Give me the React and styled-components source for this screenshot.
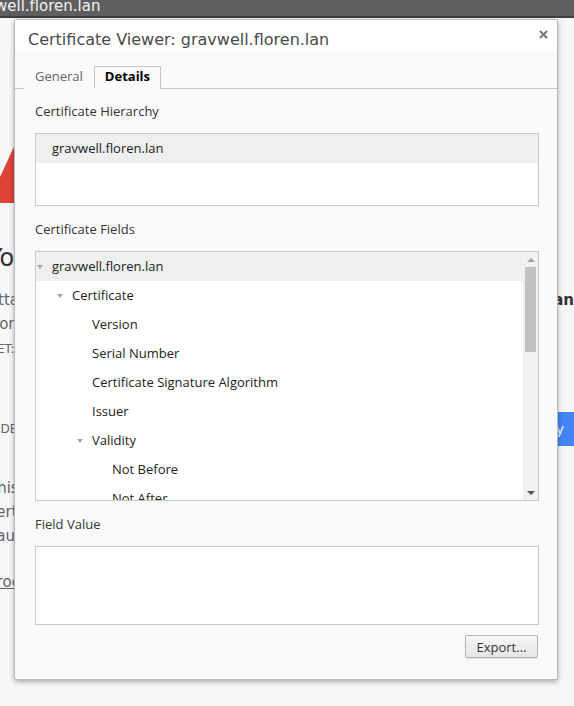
import React from "react";
import styled, { createGlobalStyle } from "styled-components";

const GlobalStyle = createGlobalStyle`
  html, body {
    margin: 0;
    padding: 0;
    background: #f7f7f7;
    overflow: hidden;
  }
  body {
    font-family: "Open Sans", "Noto Sans", sans-serif;
  }
`;

const Page = styled.div`
  position: relative;
  width: 574px;
  height: 706px;
  overflow: hidden;
  background: #f7f7f7;
`;

const AddressBar = styled.div`
  height: 16px;
  background: #5f5f5f;
  border-bottom: 2px solid #3f3f3f;
  color: #f2f2f2;
  font-family: "DejaVu Sans", sans-serif;
  font-size: 15px;
  line-height: 12px;
  white-space: nowrap;
  overflow: hidden;
  span {
    display: inline-block;
    margin-left: -5px;
  }
`;

/* the interstitial page behind the dialog */
const Interstitial = styled.main`
  width: 600px;
  margin-left: -12px;
  padding-top: 107px;
  color: #646464;
  font-family: "DejaVu Sans", sans-serif;
`;

const WarningIcon = styled.svg`
  display: block;
  width: 72px;
  height: 78px;
`;

const Heading = styled.h1`
  margin: 40px 0 0;
  font-size: 24px;
  line-height: 30px;
  font-weight: 400;
  color: #333;
  white-space: nowrap;
`;

const Para = styled.p`
  margin: ${(p) => p.$top}px 0 0;
  font-size: 15px;
  line-height: 24px;
  b {
    color: #333;
  }
`;

const ErrorCode = styled.div`
  margin-top: 4px;
  font-size: 12px;
  line-height: 18px;
  text-transform: uppercase;
`;

const Actions = styled.div`
  margin-top: 54px;
  height: 34px;
  display: flex;
  align-items: center;
  justify-content: space-between;
`;

const TextButton = styled.span`
  font-size: 12px;
  text-transform: uppercase;
  color: #646464;
`;

const PrimaryButton = styled.span`
  height: 34px;
  padding: 0 24px 0 16px;
  display: flex;
  align-items: center;
  background: #4285f4;
  color: #fff;
  font-size: 14px;
  border-radius: 2px;
`;

const Link = styled.div`
  margin-top: 22px;
  font-size: 15px;
  line-height: 24px;
  text-decoration: underline;
`;

/* certificate viewer dialog */
const Dialog = styled.div`
  position: absolute;
  left: 14px;
  top: 19px;
  width: 544px;
  height: 661px;
  box-sizing: border-box;
  background: #fafafa;
  border: 1px solid #b9b9b9;
  border-radius: 2px;
  box-shadow: 0 2px 5px rgba(0, 0, 0, 0.3);
  display: flex;
  flex-direction: column;
`;

const TitleBar = styled.div`
  height: 31px;
  padding: 10px 9px 0 13px;
  box-sizing: border-box;
  background: #fff;
  display: flex;
  justify-content: space-between;
  align-items: flex-start;
`;

const Title = styled.div`
  font-family: "DejaVu Sans", sans-serif;
  font-size: 16px;
  line-height: 20px;
  color: #4a4a4a;
`;

const Close = styled.svg`
  width: 9px;
  height: 9px;
`;

const TabStrip = styled.div`
  height: 38px;
  box-sizing: border-box;
  padding-left: 9px;
  border-bottom: 1px solid #c6c6c6;
  display: flex;
  align-items: flex-end;
`;

const Tab = styled.div`
  height: 23px;
  padding: 0 10px;
  box-sizing: border-box;
  margin-bottom: -1px;
  font-size: 13px;
  line-height: 19px;
  color: ${(p) => (p.$active ? "#000" : "#666")};
  font-weight: ${(p) => (p.$active ? 700 : 400)};
  background: #fafafa;
  border: 1px solid ${(p) => (p.$active ? "#c6c6c6" : "transparent")};
  border-bottom: 1px solid ${(p) => (p.$active ? "#fafafa" : "transparent")};
`;

const Content = styled.div`
  flex: 1;
  padding: 0 18px 20px 20px;
  display: flex;
  flex-direction: column;
`;

const Label = styled.div`
  height: ${(p) => p.$h}px;
  display: flex;
  align-items: center;
  font-size: 13px;
  color: #333;
`;

const ListBox = styled.div`
  height: ${(p) => p.$h}px;
  box-sizing: border-box;
  border: 1px solid #c8c8c8;
  background: #fff;
  display: flex;
  overflow: hidden;
`;

const Rows = styled.div`
  flex: 1;
  display: flex;
  flex-direction: column;
  min-width: 0;
`;

const Row = styled.div`
  flex: none;
  height: 29px;
  box-sizing: border-box;
  padding-left: ${(p) => p.$indent}px;
  padding-bottom: 2px;
  display: flex;
  align-items: center;
  font-size: 13px;
  color: #222;
  white-space: nowrap;
  background: ${(p) => (p.$selected ? "#efefef" : "transparent")};
`;

const Toggle = styled.span`
  width: 15px;
  flex: none;
  display: flex;
  align-items: center;
  padding-top: 2px;
  &::before {
    content: "";
    display: ${(p) => (p.$open ? "block" : "none")};
    border-left: 3.5px solid transparent;
    border-right: 3.5px solid transparent;
    border-top: 4px solid #a3a3a3;
  }
`;

const Scrollbar = styled.div`
  width: 15px;
  flex: none;
  background: #f1f1f1;
  display: flex;
  flex-direction: column;
`;

const ScrollArrow = styled.div`
  height: 15px;
  display: flex;
  align-items: center;
  justify-content: center;
  margin-top: ${(p) => (p.$down ? "auto" : "0")};
  &::before {
    content: "";
    border-left: 4px solid transparent;
    border-right: 4px solid transparent;
    ${(p) =>
      p.$down
        ? "border-top: 4px solid #505050;"
        : "border-bottom: 4px solid #a3a3a3;"}
  }
`;

const Thumb = styled.div`
  height: 85px;
  margin: 0 2px;
  background: #c1c1c1;
`;

const Footer = styled.div`
  margin-top: 10px;
  display: flex;
  justify-content: flex-end;
`;

const Button = styled.button`
  height: 23px;
  width: 73px;
  padding: 0;
  margin-right: 1px;
  border: 1px solid #b4b4b4;
  border-radius: 2px;
  background: linear-gradient(#f6f6f6, #e6e6e6);
  box-shadow: 0 1px 1px rgba(0, 0, 0, 0.1);
  font-family: inherit;
  font-size: 13px;
  color: #333;
`;

const fields = [
  { label: "gravwell.floren.lan", level: 0, open: true, selected: true },
  { label: "Certificate", level: 1, open: true },
  { label: "Version", level: 2 },
  { label: "Serial Number", level: 2 },
  { label: "Certificate Signature Algorithm", level: 2 },
  { label: "Issuer", level: 2 },
  { label: "Validity", level: 2, open: true },
  { label: "Not Before", level: 3 },
  { label: "Not After", level: 3 },
  { label: "Subject", level: 2 },
];

export default function App() {
  return (
    <Page>
      <GlobalStyle />
      <AddressBar>
        <span>well.floren.lan</span>
      </AddressBar>

      <Interstitial>
        <WarningIcon viewBox="0 0 72 78">
          <polygon points="36,0 72,78 0,78" fill="#db4437" />
        </WarningIcon>
        <Heading>Your connection is not private</Heading>
        <Para $top={15}>
          Attackers might be trying to steal your information from{" "}
          <b>gravwell.floren.lan</b> (for example, passwords, messages, or
          credit cards).
        </Para>
        <ErrorCode>NET::ERR_CERT_AUTHORITY_INVALID</ErrorCode>
        <Actions>
          <TextButton>Hide details</TextButton>
          <PrimaryButton>Back to safety</PrimaryButton>
        </Actions>
        <Para $top={30}>
          This server could not prove that it is <b>gravwell.floren.lan</b>;
          its security certificate is not trusted by your computer's operating
          system. This may be caused by a misconfiguration or an attacker
          intercepting your connection.
        </Para>
        <Link>Proceed to gravwell.floren.lan (unsafe)</Link>
      </Interstitial>

      <Dialog>
        <TitleBar>
          <Title>Certificate Viewer: gravwell.floren.lan</Title>
          <Close viewBox="0 0 9 9">
            <path d="M1 1 L8 8 M8 1 L1 8" stroke="#777" strokeWidth="2" />
          </Close>
        </TitleBar>
        <TabStrip>
          <Tab>General</Tab>
          <Tab $active>Details</Tab>
        </TabStrip>
        <Content>
          <Label $h={44}>Certificate Hierarchy</Label>
          <ListBox $h={73}>
            <Rows>
              <Row $indent={16} $selected>
                gravwell.floren.lan
              </Row>
            </Rows>
          </ListBox>
          <Label $h={45}>Certificate Fields</Label>
          <ListBox $h={250}>
            <Rows>
              {fields.map((f) => (
                <Row key={f.label} $indent={1 + f.level * 20} $selected={f.selected}>
                  <Toggle $open={f.open} />
                  {f.label}
                </Row>
              ))}
            </Rows>
            <Scrollbar>
              <ScrollArrow />
              <Thumb />
              <ScrollArrow $down />
            </Scrollbar>
          </ListBox>
          <Label $h={45}>Field Value</Label>
          <ListBox $h={79} />
          <Footer>
            <Button>Export...</Button>
          </Footer>
        </Content>
      </Dialog>
    </Page>
  );
}
